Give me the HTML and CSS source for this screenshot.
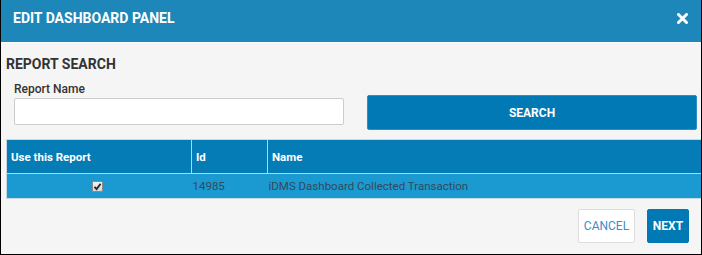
FILE: index.html
```html
<!DOCTYPE html>
<html>
<head>
<meta charset="utf-8">
<link rel="stylesheet" href="styles.css">
</head>
<body>
<div class="modal">
  <div class="modal-header">
    <div class="modal-title">EDIT DASHBOARD PANEL</div>
    <svg class="close" width="11" height="11" viewBox="0 0 11 11"><path d="M1.5 1.5 L9.5 9.5 M9.5 1.5 L1.5 9.5" stroke="#fff" stroke-width="3" stroke-linecap="round"/></svg>
  </div>
  <div class="modal-body">
    <div class="section-title">REPORT SEARCH</div>
    <div class="search-row">
      <div class="field">
        <label class="field-label">Report Name</label>
        <input class="field-input" type="text">
      </div>
      <button class="btn-search">SEARCH</button>
    </div>
    <table class="grid">
      <thead>
        <tr><th class="c1">Use this Report</th><th class="c2">Id</th><th class="c3">Name</th></tr>
      </thead>
      <tbody>
        <tr>
          <td class="check-cell"><span class="checkbox"><svg width="9" height="9" viewBox="0 0 9 9"><path d="M1.5 4.8 L3.6 7 L7.6 1.8" stroke="#222" stroke-width="1.8" fill="none"/></svg></span></td>
          <td>14985</td>
          <td>iDMS Dashboard Collected Transaction</td>
        </tr>
      </tbody>
    </table>
    <div class="footer">
      <button class="btn-cancel">CANCEL</button>
      <button class="btn-next">NEXT</button>
    </div>
  </div>
</div>
</body>
</html>
```

FILE: styles.css
```css
html, body {
  margin: 0;
  padding: 0;
}
body {
  font-family: Roboto, "Liberation Sans", Arial, sans-serif;
  color: #333;
}
.modal {
  width: 702px;
  height: 255px;
  box-sizing: border-box;
  border: 1px solid #000;
  border-top: 0;
  background: #f5f5f5;
  overflow: hidden;
}
.modal-header {
  height: 43px;
  box-sizing: border-box;
  background: #1c87b8;
  display: flex;
  justify-content: space-between;
  align-items: flex-start;
  padding: 10px 13px 0 12px;
  border-bottom: 1px solid #fafafa;
}
.modal-title {
  color: #fff;
  font-weight: 700;
  font-size: 14px;
  line-height: 16px;
}
.close {
  margin-top: 3px;
}
.modal-body {
  padding: 13px 0 0 5px;
}
.section-title {
  font-weight: 700;
  font-size: 14px;
  line-height: 16px;
  color: #333;
}
.search-row {
  display: flex;
  align-items: flex-start;
  padding: 10px 4px 0 8px;
  gap: 23px;
}
.field {
  display: flex;
  flex-direction: column;
  width: 330px;
}
.field-label {
  font-size: 12px;
  line-height: 14px;
  font-weight: 500;
  color: #333;
}
.field-input {
  margin: 2px 0 0;
  height: 27px;
  box-sizing: border-box;
  border: 1px solid #ccc;
  border-radius: 2px;
  background: #fff;
  padding: 0 6px;
}
.btn-search {
  width: 330px;
  height: 35px;
  margin-top: 13px;
  background: #0079b5;
  border: 1px solid #2d8fc4;
  border-radius: 2px;
  color: #fff;
  font-family: inherit;
  font-weight: 700;
  font-size: 12px;
}
.grid {
  margin-top: 9px;
  width: 696px;
  border-collapse: collapse;
  border: 1px solid #c9d9e3;
  font-size: 11.5px;
}
.grid th {
  height: 34px;
  box-sizing: border-box;
  background: #067cb7;
  color: #fff;
  text-align: left;
  font-weight: 700;
  padding: 0 4px;
  border-left: 1px solid #b7d6e8;
  border-bottom: 1px solid #b7d6e8;
}
.grid th.c1 { width: 185px; border-left: 0; }
.grid th.c2 { width: 76px; }
.grid td {
  height: 25px;
  box-sizing: border-box;
  background: #1b9ad1;
  color: #34495a;
  padding: 0 1px;
}
.grid td.check-cell {
  text-align: center;
  padding-right: 4px;
}
.checkbox {
  display: inline-block;
  width: 11px;
  height: 11px;
  box-sizing: border-box;
  border: 1px solid #8a8a8a;
  background: linear-gradient(#f2f2f2, #d6d6d6);
  border-radius: 1px;
  vertical-align: middle;
  position: relative;
}
.checkbox svg {
  position: absolute;
  left: 0;
  top: 0;
}
.footer {
  display: flex;
  justify-content: flex-end;
  gap: 12px;
  margin-top: 10px;
  padding-right: 12px;
}
.footer button {
  height: 34px;
  font-family: inherit;
  font-size: 12px;
  border-radius: 2px;
  box-sizing: border-box;
}
.btn-cancel {
  width: 57px;
  background: #fff;
  border: 1px solid #ddd;
  color: #3d8cc8;
  padding: 0;
}
.btn-next {
  width: 42px;
  background: #0079b5;
  border: 1px solid #0079b5;
  color: #fff;
  font-weight: 700;
  padding: 0;
}
```
